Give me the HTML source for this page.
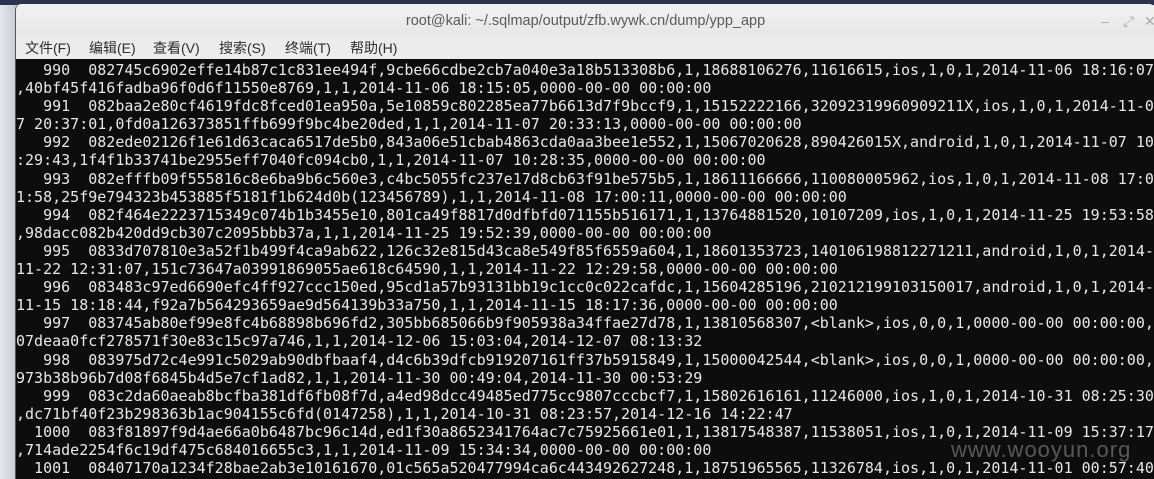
<!DOCTYPE html>
<html><head><meta charset="utf-8"><style>
body{margin:0;width:1154px;height:479px;overflow:hidden;background:#cfd4dc;position:relative;font-family:"Liberation Sans","Noto Sans CJK SC",sans-serif}
.top{position:absolute;left:0;top:0;width:1154px;height:5px;background:#2a3450}
.left{position:absolute;left:0;top:5px;width:15px;height:474px;background:linear-gradient(90deg,#e4e7ee,#c9ced8)}
.win{position:absolute;left:15px;top:4px;width:1139px;height:475px;background:#ececec;border-radius:6px 6px 0 0;border-left:1px solid #555}
.title{position:absolute;left:0;top:0;width:1139px;height:32px;text-align:center;line-height:34px;font-size:14.5px;color:#5a5a5a;background:linear-gradient(#f2f2f2,#e6e6e6);border-radius:6px 6px 0 0}
.ctl{position:absolute;top:9px;font-size:14px;color:#aaa}
.menu{position:absolute;left:0;top:32px;height:23px;width:1139px;font-size:14px;color:#2e2e2e}
.menu span{position:absolute;top:2px}
.term{position:absolute;left:0;top:55px;width:1139px;height:420px;background:#0d0d10;overflow:hidden}
pre{margin:0;position:absolute;left:0;top:2px;font-family:"DejaVu Sans Mono","Liberation Mono",monospace;font-size:15px;line-height:18.1px;color:#e8e8e8}
.wm{position:absolute;left:935px;top:378px;font-size:22px;color:rgba(150,150,150,.55);letter-spacing:1px}
</style></head><body>
<div class="top"></div><div class="left"></div>
<div class="win">
<div class="title">root@kali: ~/.sqlmap/output/zfb.wywk.cn/dump/ypp_app</div>
<span class="ctl" style="left:1085px">–</span><span class="ctl" style="left:1107px">⤢</span><span class="ctl" style="left:1128px">✕</span>
<div class="menu"><span style="left:9px">文件(F)</span><span style="left:73px">编辑(E)</span><span style="left:137px">查看(V)</span><span style="left:203px">搜索(S)</span><span style="left:269px">终端(T)</span><span style="left:334px">帮助(H)</span></div>
<div class="term"><pre>   990  082745c6902effe14b87c1c831ee494f,9cbe66cdbe2cb7a040e3a18b513308b6,1,18688106276,11616615,ios,1,0,1,2014-11-06 18:16:07
,40bf45f416fadba96f0d6f11550e8769,1,1,2014-11-06 18:15:05,0000-00-00 00:00:00
   991  082baa2e80cf4619fdc8fced01ea950a,5e10859c802285ea77b6613d7f9bccf9,1,15152222166,32092319960909211X,ios,1,0,1,2014-11-0
7 20:37:01,0fd0a126373851ffb699f9bc4be20ded,1,1,2014-11-07 20:33:13,0000-00-00 00:00:00
   992  082ede02126f1e61d63caca6517de5b0,843a06e51cbab4863cda0aa3bee1e552,1,15067020628,890426015X,android,1,0,1,2014-11-07 10
:29:43,1f4f1b33741be2955eff7040fc094cb0,1,1,2014-11-07 10:28:35,0000-00-00 00:00:00
   993  082efffb09f555816c8e6ba9b6c560e3,c4bc5055fc237e17d8cb63f91be575b5,1,18611166666,110080005962,ios,1,0,1,2014-11-08 17:0
1:58,25f9e794323b453885f5181f1b624d0b(123456789),1,1,2014-11-08 17:00:11,0000-00-00 00:00:00
   994  082f464e2223715349c074b1b3455e10,801ca49f8817d0dfbfd071155b516171,1,13764881520,10107209,ios,1,0,1,2014-11-25 19:53:58
,98dacc082b420dd9cb307c2095bbb37a,1,1,2014-11-25 19:52:39,0000-00-00 00:00:00
   995  0833d707810e3a52f1b499f4ca9ab622,126c32e815d43ca8e549f85f6559a604,1,18601353723,140106198812271211,android,1,0,1,2014-
11-22 12:31:07,151c73647a03991869055ae618c64590,1,1,2014-11-22 12:29:58,0000-00-00 00:00:00
   996  083483c97ed6690efc4ff927ccc150ed,95cd1a57b93131bb19c1cc0c022cafdc,1,15604285196,210212199103150017,android,1,0,1,2014-
11-15 18:18:44,f92a7b564293659ae9d564139b33a750,1,1,2014-11-15 18:17:36,0000-00-00 00:00:00
   997  083745ab80ef99e8fc4b68898b696fd2,305bb685066b9f905938a34ffae27d78,1,13810568307,&lt;blank&gt;,ios,0,0,1,0000-00-00 00:00:00,
07deaa0fcf278571f30e83c15c97a746,1,1,2014-12-06 15:03:04,2014-12-07 08:13:32
   998  083975d72c4e991c5029ab90dbfbaaf4,d4c6b39dfcb919207161ff37b5915849,1,15000042544,&lt;blank&gt;,ios,0,0,1,0000-00-00 00:00:00,
973b38b96b7d08f6845b4d5e7cf1ad82,1,1,2014-11-30 00:49:04,2014-11-30 00:53:29
   999  083c2da60aeab8bcfba381df6fb08f7d,a4ed98dcc49485ed775cc9807cccbcf7,1,15802616161,11246000,ios,1,0,1,2014-10-31 08:25:30
,dc71bf40f23b298363b1ac904155c6fd(0147258),1,1,2014-10-31 08:23:57,2014-12-16 14:22:47
  1000  083f81897f9d4ae66a0b6487bc96c14d,ed1f30a8652341764ac7c75925661e01,1,13817548387,11538051,ios,1,0,1,2014-11-09 15:37:17
,714ade2254f6c19df475c684016655c3,1,1,2014-11-09 15:34:34,0000-00-00 00:00:00
  1001  08407170a1234f28bae2ab3e10161670,01c565a520477994ca6c443492627248,1,18751965565,11326784,ios,1,0,1,2014-11-01 00:57:40
,6d01d6c5b494b4982c5fd3f670967c,1,1,2014-11-01 00:56:19,2014-12-04 17:38:29</pre>
<div class="wm">www.wooyun.org</div></div>
</div>
</body></html>
